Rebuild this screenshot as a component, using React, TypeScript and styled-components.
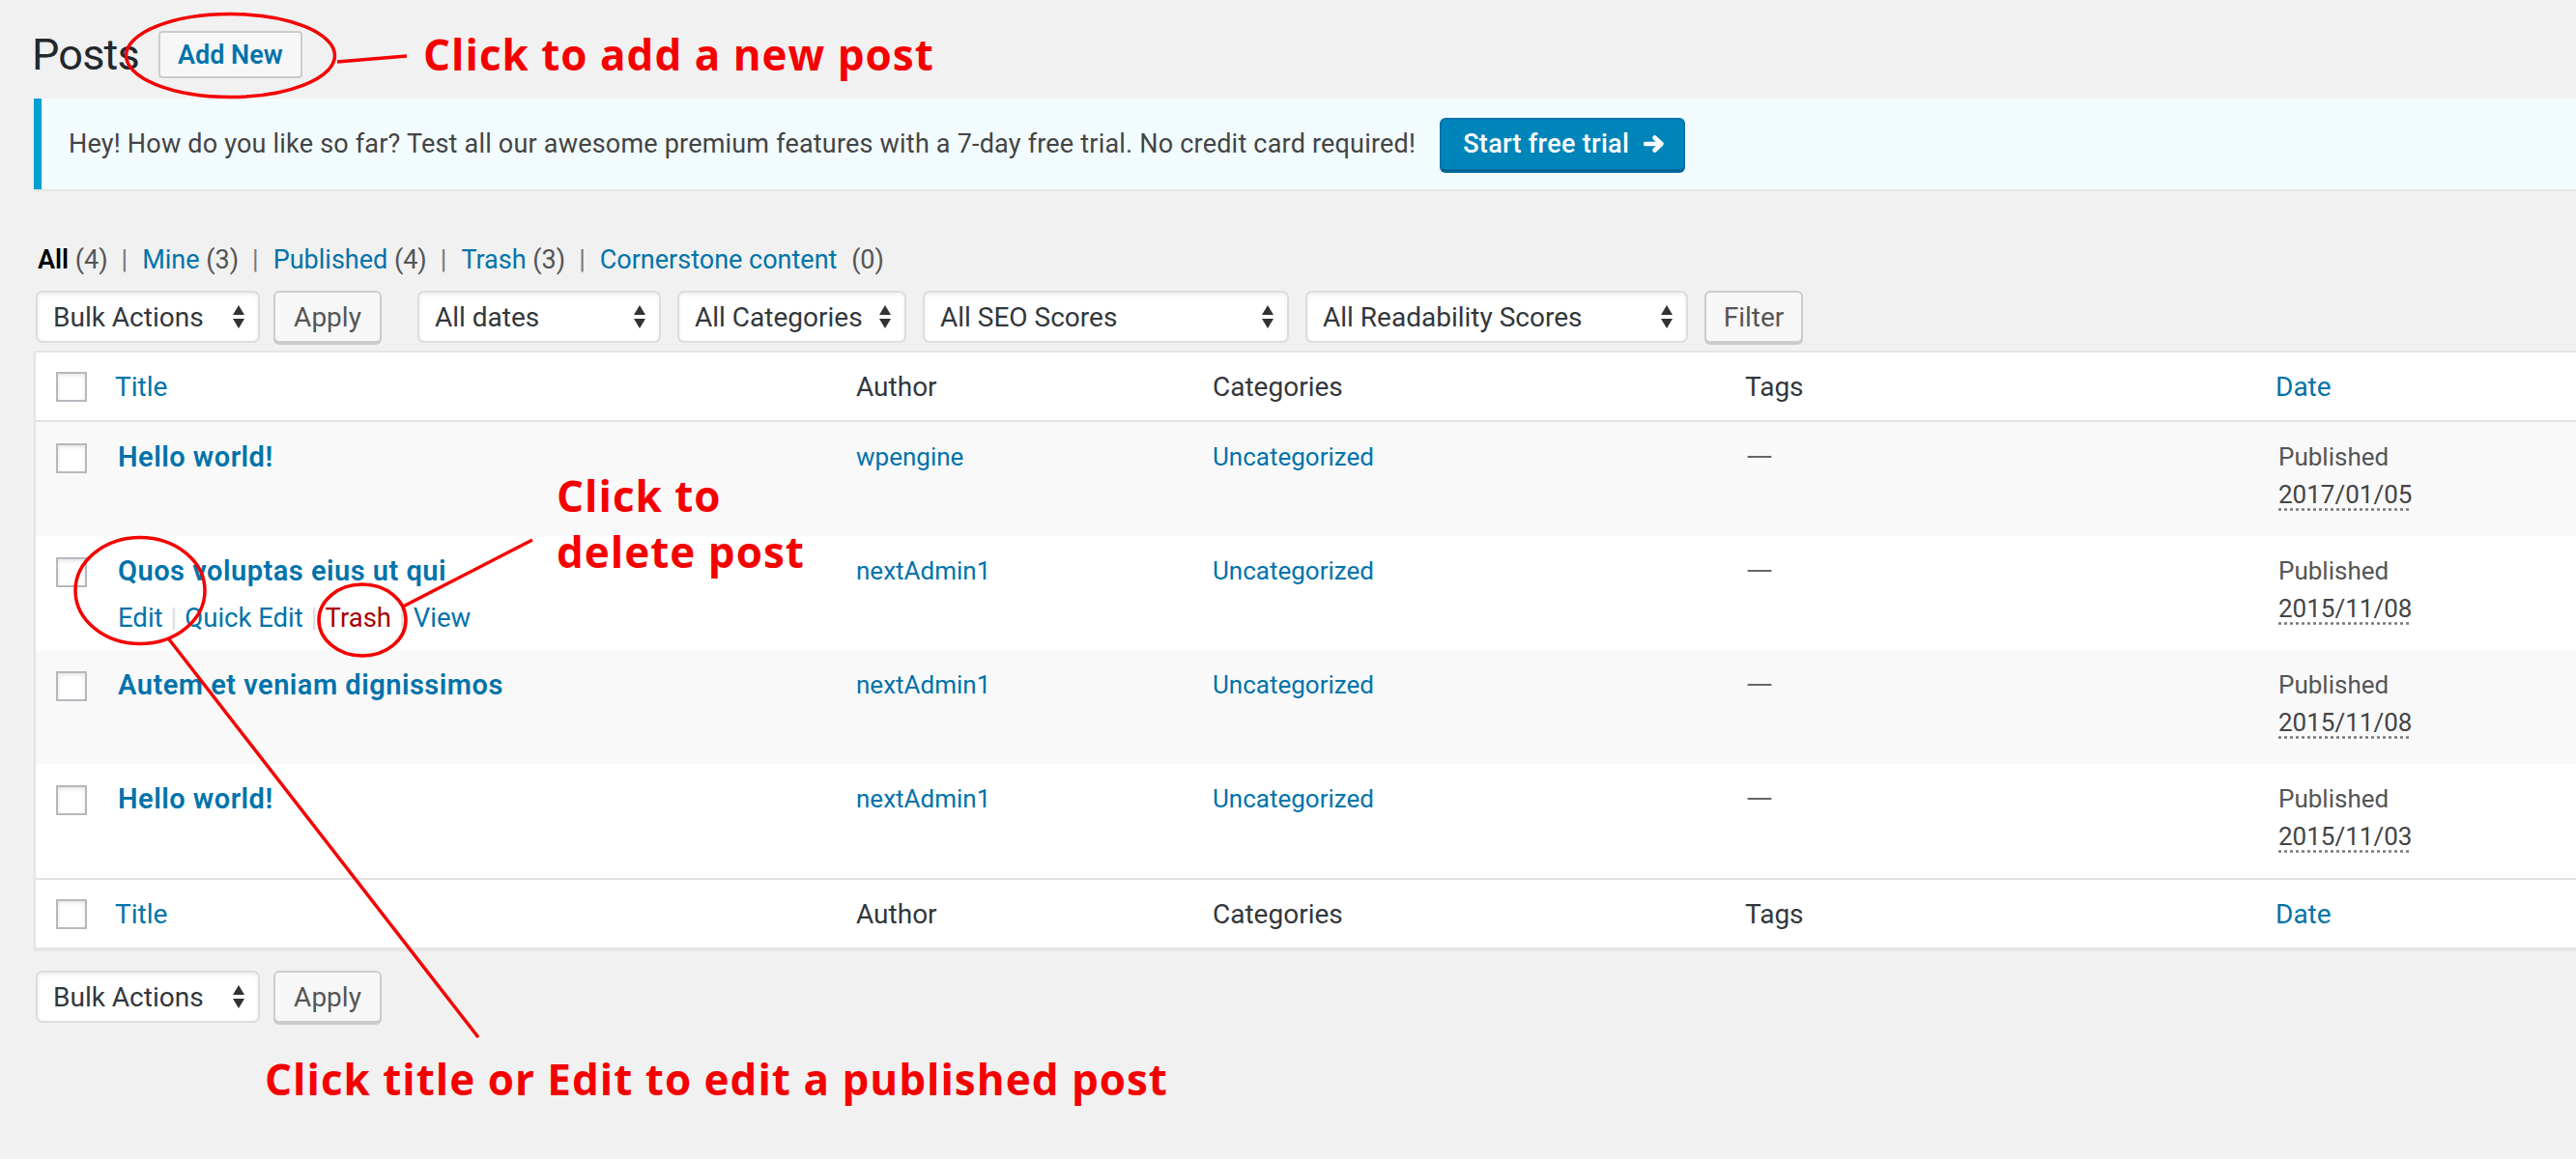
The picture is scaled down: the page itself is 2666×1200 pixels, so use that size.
import React from 'react';
import styled, { createGlobalStyle } from 'styled-components';

const Global = createGlobalStyle`
  html, body { margin: 0; padding: 0; background: #f1f1f1; }
  body {
    font-family: Roboto, "Noto Sans", "Liberation Sans", sans-serif;
    color: #444;
  }
  * { box-sizing: border-box; }
`;

const COLS = '62px 767px 369px 551px 549px 1fr';

const Page = styled.div`
  position: relative;
  width: 2666px;
  height: 1200px;
  overflow: hidden;
  padding-left: 35px;
`;

const HeaderRow = styled.div`
  display: flex;
  align-items: center;
  height: 59px;
  margin-top: 27px;
`;

const PageTitle = styled.h1`
  margin: 0 0 0 -2px;
  font-size: 45px;
  letter-spacing: -0.8px;
  line-height: 59px;
  font-weight: 400;
  color: #23282d;
`;

const AddNew = styled.a`
  margin-left: 20px;
  height: 49px;
  padding: 0 18px;
  display: flex;
  align-items: center;
  border: 2px solid #ccc;
  border-radius: 4px;
  background: #f7f7f7;
  color: #0073aa;
  font-size: 27px;
  font-weight: 600;
  text-decoration: none;
`;

const Notice = styled.div`
  margin-top: 16px;
  margin-right: -40px;
  height: 94px;
  display: flex;
  align-items: center;
  padding-left: 28px;
  background: #f2fbfe;
  border-left: 8px solid #00a0d2;
  box-shadow: 0 2px 2px rgba(0, 0, 0, 0.06);
  font-size: 27px;
  letter-spacing: 0.2px;
  color: #444;
`;

const TrialButton = styled.a`
  margin-left: 25px;
  height: 55px;
  padding: 0 18px 0 22px;
  display: flex;
  align-items: center;
  gap: 14px;
  background: #0085ba;
  border: 2px solid #0073aa;
  border-bottom-color: #006799;
  border-radius: 6px;
  box-shadow: 0 2px 0 #006799;
  color: #fff;
  font-size: 27px;
  letter-spacing: 0.3px;
  font-weight: 500;
  text-decoration: none;
`;

const ArrowIcon = () => (
  <svg width="24" height="20" viewBox="0 0 24 20">
    <path
      d="M3 10 H19 M12.5 3.5 L19.5 10 L12.5 16.5"
      fill="none"
      stroke="#fff"
      strokeWidth="4.5"
      strokeLinecap="round"
      strokeLinejoin="round"
    />
  </svg>
);

const Views = styled.ul`
  list-style: none;
  margin: 54px 0 0 0;
  padding: 0 0 0 4px;
  display: flex;
  font-size: 27px;
  line-height: 39px;
  color: #666;
`;

const ViewItem = styled.li`
  white-space: pre;
`;

const ViewLink = styled.a<{ $current?: boolean }>`
  color: ${p => (p.$current ? '#000' : '#0073aa')};
  font-weight: ${p => (p.$current ? 600 : 400)};
  text-decoration: none;
`;

const Count = styled.span<{ $wide?: boolean }>`
  color: #555;
  margin-left: ${p => (p.$wide ? '8px' : '0')};
`;

const Pipe = styled.span`
  margin: 0 15px 0 14px;
  color: #777;
`;

const Toolbar = styled.div<{ $bottom?: boolean }>`
  display: flex;
  align-items: flex-start;
  height: 62px;
  margin-top: ${p => (p.$bottom ? '22px' : '12px')};
  padding-left: 2px;
`;

const Group = styled.div<{ $gap: number; $ml?: number }>`
  display: flex;
  gap: ${p => p.$gap}px;
  margin-left: ${p => p.$ml ?? 0}px;
`;

const Select = styled.div<{ $w: number }>`
  width: ${p => p.$w}px;
  height: 54px;
  padding: 0 14px 0 16px;
  display: flex;
  align-items: center;
  justify-content: space-between;
  background: #fff;
  border: 2px solid #ddd;
  border-radius: 7px;
  box-shadow: inset 0 2px 4px rgba(0, 0, 0, 0.07);
  font-size: 28px;
  color: #32373c;
`;

const Button = styled.button<{ $w: number }>`
  width: ${p => p.$w}px;
  height: 54px;
  margin: 0;
  padding: 0;
  background: #f7f7f7;
  border: 2px solid #ccc;
  border-radius: 6px;
  box-shadow: 0 2px 0 #ccc;
  font-family: inherit;
  font-size: 28px;
  color: #555;
`;

const Arrows = () => (
  <svg width="12" height="24" viewBox="0 0 12 24">
    <path d="M6 0 L12 10 L0 10 Z M0 14 L12 14 L6 24 Z" fill="#333" />
  </svg>
);

const Table = styled.div`
  margin-right: -40px;
  background: #fff;
  border: 2px solid #e5e5e5;
  box-shadow: 0 2px 2px rgba(0, 0, 0, 0.05);
`;

const HeadRow = styled.div<{ $foot?: boolean }>`
  display: grid;
  grid-template-columns: ${COLS};
  height: 72px;
  border-bottom: ${p => (p.$foot ? 'none' : '2px solid #e1e1e1')};
  border-top: ${p => (p.$foot ? '2px solid #e1e1e1' : 'none')};
`;

const Row = styled.div<{ $alt?: boolean }>`
  display: grid;
  grid-template-columns: ${COLS};
  height: 118px;
  background: ${p => (p.$alt ? '#f9f9f9' : '#fff')};
`;

const CheckCell = styled.div<{ $head?: boolean }>`
  padding: ${p => (p.$head ? '20px' : '22px')} 0 0 21px;
`;

const Checkbox = styled.span`
  display: block;
  width: 32px;
  height: 31px;
  background: #fff;
  border: 2px solid #b4b9be;
  box-shadow: inset 0 2px 4px rgba(0, 0, 0, 0.1);
`;

const Th = styled.div<{ $link?: boolean }>`
  padding: 16px 20px 0;
  font-size: 28px;
  line-height: 39px;
  color: ${p => (p.$link ? '#0073aa' : '#32373c')};
`;

const Td = styled.div<{ $pl?: number }>`
  padding: 17px 20px 0 ${p => p.$pl ?? 20}px;
  font-size: 26px;
  line-height: 39px;
  color: #555;
`;

const RowTitle = styled.a`
  display: block;
  font-size: 29px;
  letter-spacing: 0.5px;
  font-weight: 600;
  color: #0073aa;
  text-decoration: none;
`;

const RowActions = styled.div`
  padding-top: 9px;
  font-size: 27.5px;
  line-height: 39px;
  white-space: pre;
  color: #ddd;
`;

const ActionSep = styled.span`
  margin: 0 8px;
`;

const Action = styled.a<{ $danger?: boolean }>`
  color: ${p => (p.$danger ? '#a00' : '#0073aa')};
  text-decoration: none;
`;

const Link = styled.a`
  color: #0073aa;
  text-decoration: none;
`;

const Dash = styled.span`
  display: inline-block;
  color: #666;
  transform: scaleX(1.45);
  transform-origin: left center;
`;

const DateAbbr = styled.abbr`
  color: #444;
  text-decoration: underline dotted #777;
  text-underline-offset: 5px;
`;

const Overlay = styled.svg`
  position: absolute;
  left: 0;
  top: 0;
  pointer-events: none;
`;

const Note = styled.text`
  font-family: "Open Sans", Lato, "Liberation Sans", sans-serif;
  font-weight: 700;
  font-size: 44px;
  letter-spacing: 1px;
  fill: #f50000;
`;

type Post = {
  title: string;
  author: string;
  date: string;
  actions?: boolean;
};

const posts: Post[] = [
  { title: 'Hello world!', author: 'wpengine', date: '2017/01/05' },
  { title: 'Quos voluptas eius ut qui', author: 'nextAdmin1', date: '2015/11/08', actions: true },
  { title: 'Autem et veniam dignissimos', author: 'nextAdmin1', date: '2015/11/08' },
  { title: 'Hello world!', author: 'nextAdmin1', date: '2015/11/03' },
];

const HeaderCells = ({ foot }: { foot?: boolean }) => (
  <HeadRow $foot={foot}>
    <CheckCell $head>
      <Checkbox />
    </CheckCell>
    <Th $link>Title</Th>
    <Th>Author</Th>
    <Th>Categories</Th>
    <Th>Tags</Th>
    <Th $link>Date</Th>
  </HeadRow>
);

const BulkBar = ({ bottom }: { bottom?: boolean }) => (
  <Toolbar $bottom={bottom}>
    <Group $gap={14}>
      <Select $w={232}>
        Bulk Actions <Arrows />
      </Select>
      <Button $w={112}>Apply</Button>
    </Group>
    {!bottom && (
      <Group $gap={17} $ml={37}>
        <Select $w={252}>
          All dates <Arrows />
        </Select>
        <Select $w={237}>
          All Categories <Arrows />
        </Select>
        <Select $w={379}>
          All SEO Scores <Arrows />
        </Select>
        <Select $w={396}>
          All Readability Scores <Arrows />
        </Select>
        <Button $w={102}>Filter</Button>
      </Group>
    )}
  </Toolbar>
);

export default function App() {
  return (
    <Page>
      <Global />
      <HeaderRow>
        <PageTitle>Posts</PageTitle>
        <AddNew>Add New</AddNew>
      </HeaderRow>

      <Notice>
        Hey! How do you like so far? Test all our awesome premium features with a 7-day free trial. No credit card required!
        <TrialButton>
          Start free trial
          <ArrowIcon />
        </TrialButton>
      </Notice>

      <Views>
        <ViewItem>
          <ViewLink $current>All</ViewLink> <Count>(4)</Count>
          <Pipe>|</Pipe>
        </ViewItem>
        <ViewItem>
          <ViewLink>Mine</ViewLink> <Count>(3)</Count>
          <Pipe>|</Pipe>
        </ViewItem>
        <ViewItem>
          <ViewLink>Published</ViewLink> <Count>(4)</Count>
          <Pipe>|</Pipe>
        </ViewItem>
        <ViewItem>
          <ViewLink>Trash</ViewLink> <Count>(3)</Count>
          <Pipe>|</Pipe>
        </ViewItem>
        <ViewItem>
          <ViewLink>Cornerstone content</ViewLink> <Count $wide>(0)</Count>
        </ViewItem>
      </Views>

      <BulkBar />

      <Table>
        <HeaderCells />
        {posts.map((p, i) => (
          <Row key={i} $alt={i % 2 === 0}>
            <CheckCell>
              <Checkbox />
            </CheckCell>
            <Td $pl={23}>
              <RowTitle>{p.title}</RowTitle>
              {p.actions && (
                <RowActions>
                  <Action>Edit</Action>
                  <ActionSep>|</ActionSep>
                  <Action>Quick Edit</Action>
                  <ActionSep>|</ActionSep>
                  <Action $danger>Trash</Action>
                  <ActionSep>|</ActionSep>
                  <Action>View</Action>
                </RowActions>
              )}
            </Td>
            <Td>
              <Link>{p.author}</Link>
            </Td>
            <Td>
              <Link>Uncategorized</Link>
            </Td>
            <Td>
              <Dash>—</Dash>
            </Td>
            <Td $pl={23}>
              Published
              <br />
              <DateAbbr>{p.date}</DateAbbr>
            </Td>
          </Row>
        ))}
        <HeaderCells foot />
      </Table>

      <BulkBar bottom />

      <Overlay width="2666" height="1200" viewBox="0 0 2666 1200">
        <g fill="none" stroke="#f50000" strokeWidth="3.5">
          <ellipse cx="238.5" cy="57.5" rx="108" ry="43" />
          <line x1="349" y1="64" x2="421" y2="58" />
          <ellipse cx="145" cy="611.5" rx="67" ry="55" />
          <line x1="175" y1="662" x2="495" y2="1074" />
          <ellipse cx="375" cy="642" rx="45" ry="37" />
          <line x1="417" y1="628" x2="551" y2="559" />
        </g>
        <Note x="438" y="73">Click to add a new post</Note>
        <Note x="576" y="530">Click to</Note>
        <Note x="576" y="588">delete post</Note>
        <Note x="274" y="1134">Click title or Edit to edit a published post</Note>
      </Overlay>
    </Page>
  );
}
